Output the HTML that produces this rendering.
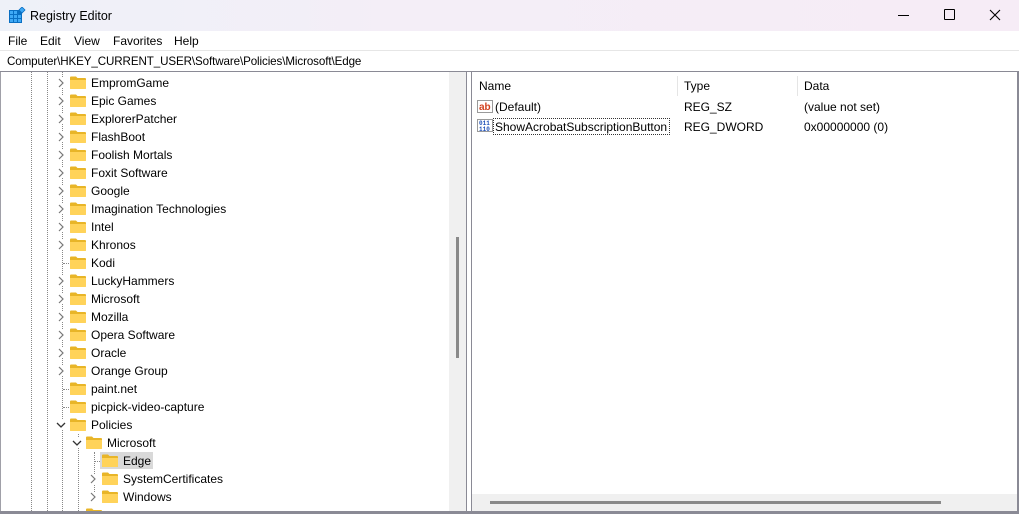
<!DOCTYPE html>
<html><head><meta charset="utf-8"><style>
*{margin:0;padding:0;box-sizing:border-box}
body{width:1019px;height:514px;overflow:hidden;background:#fff;font-family:"Liberation Sans",sans-serif;font-size:12px;color:#000;position:relative}
.a{position:absolute;white-space:nowrap}
.fold{position:absolute;width:16px;height:13px}
.chev{position:absolute;width:10px;height:10px}
.dv{position:absolute;border-left:1px dotted #888;width:0}
.dh{position:absolute;border-top:1px dotted #888;height:0}
#treewrap{position:absolute;left:0;top:72px;width:449px;height:439px;overflow:hidden}
#tree{position:absolute;left:0;top:-72px;width:449px;height:511px}
</style></head><body>
<div class="a" style="left:0;top:0;width:1019px;height:31px;background:linear-gradient(90deg,#eef1f8,#f4eef7 40%,#f6ecf6)"></div>
<svg class="a" style="left:8px;top:7px" width="18" height="18" viewBox="0 0 18 18">
<rect x="1" y="3" width="13" height="13" fill="#0a6fc2"/>
<g fill="#3fa9f5"><rect x="2" y="4" width="3" height="3"/><rect x="6" y="4" width="3" height="3"/><rect x="2" y="8" width="3" height="3"/><rect x="6" y="8" width="3" height="3"/><rect x="10" y="8" width="3" height="3"/><rect x="2" y="12" width="3" height="3"/><rect x="6" y="12" width="3" height="3"/><rect x="10" y="12" width="3" height="3"/></g>
<path d="M14 0 L17 3 L14 6 L11 3Z" fill="#3fa9f5" stroke="#0a6fc2" stroke-width="0.8"/></svg>
<div class="a" style="left:30px;top:9px;font-size:12.5px">Registry Editor</div>
<div class="a" style="left:898px;top:15px;width:11px;border-top:1px solid #000"></div>
<div class="a" style="left:944px;top:9px;width:11px;height:11px;border:1px solid #000;border-radius:1px"></div>
<svg class="a" style="left:989px;top:9px" width="12" height="12"><path d="M1 1L11 11M11 1L1 11" stroke="#000" stroke-width="1.1"/></svg>
<div class="a" style="left:8px;top:34px">File</div>
<div class="a" style="left:40px;top:34px">Edit</div>
<div class="a" style="left:74px;top:34px">View</div>
<div class="a" style="left:113px;top:34px">Favorites</div>
<div class="a" style="left:174px;top:34px">Help</div>
<div class="a" style="left:0;top:50px;width:1019px;height:1px;background:#e6e6e6"></div>
<div class="a" style="left:7px;top:55px;font-size:11.6px;letter-spacing:-0.1px">Computer\HKEY_CURRENT_USER\Software\Policies\Microsoft\Edge</div>
<div class="a" style="left:0;top:71px;width:1019px;height:1px;background:#8a8a95"></div>
<div class="a" style="left:0;top:72px;width:1px;height:439px;background:#a0a0a8"></div>
<div class="a" style="left:1017px;top:72px;width:2px;height:439px;background:#8a8a95"></div>
<div class="a" style="left:0;top:511px;width:1019px;height:3px;background:#8a8a95"></div>
<div class="a" style="left:449px;top:72px;width:17px;height:439px;background:#f0f0f0"></div>
<div class="a" style="left:456px;top:237px;width:3px;height:121px;background:#8a8a8a"></div>
<div class="a" style="left:466px;top:72px;width:1px;height:439px;background:#8a8a95"></div>
<div class="a" style="left:471px;top:72px;width:1px;height:439px;background:#8a8a95"></div>
<div class="a" style="left:467px;top:72px;width:4px;height:439px;background:#fff"></div>
<div id="treewrap"><div id="tree">
<div class="dv" style="left:31px;top:72px;height:439px"></div>
<div class="dv" style="left:47px;top:72px;height:439px"></div>
<div class="dv" style="left:62px;top:72px;height:439px"></div>
<div class="dv" style="left:78px;top:434px;height:77px"></div>
<div class="dv" style="left:94px;top:452px;height:46px"></div>
<div id="rows"></div>
</div></div>
<div class="a" style="left:677px;top:76px;width:1px;height:20px;background:#e5e5e5"></div>
<div class="a" style="left:797px;top:76px;width:1px;height:20px;background:#e5e5e5"></div>
<div class="a" style="left:479px;top:79px">Name</div>
<div class="a" style="left:684px;top:79px">Type</div>
<div class="a" style="left:804px;top:79px">Data</div>
<svg class="a" style="left:477px;top:99px" width="16" height="15"><rect x="0.5" y="1.5" width="15" height="12" fill="#fff" stroke="#9a9a9a"/><text x="2" y="11" font-size="10" font-weight="bold" fill="#d2401e" font-family="Liberation Sans">ab</text></svg>
<div class="a" style="left:495px;top:100px">(Default)</div>
<div class="a" style="left:684px;top:100px">REG_SZ</div>
<div class="a" style="left:804px;top:100px">(value not set)</div>
<svg class="a" style="left:477px;top:118px" width="16" height="15"><rect x="0.5" y="1.5" width="15" height="12" fill="#fff" stroke="#9a9a9a"/><text x="2" y="7" font-size="6" font-weight="bold" fill="#1c4fb8" font-family="Liberation Mono">011</text><text x="2" y="13" font-size="6" font-weight="bold" fill="#1c4fb8" font-family="Liberation Mono">110</text></svg>
<div class="a" style="left:493px;top:118px;width:177px;height:17px;border:1px dotted #333"></div>
<div class="a" style="left:495px;top:120px">ShowAcrobatSubscriptionButton</div>
<div class="a" style="left:684px;top:120px">REG_DWORD</div>
<div class="a" style="left:804px;top:120px">0x00000000 (0)</div>
<div class="a" style="left:472px;top:494px;width:545px;height:17px;background:#f0f0f0"></div>
<div class="a" style="left:490px;top:501px;width:451px;height:3px;background:#8a8a8a"></div>
<script>
var rows=[["EmpromGame",1,1],["Epic Games",1,1],["ExplorerPatcher",1,1],["FlashBoot",1,1],["Foolish Mortals",1,1],["Foxit Software",1,1],["Google",1,1],["Imagination Technologies",1,1],["Intel",1,1],["Khronos",1,1],["Kodi",1,0],["LuckyHammers",1,1],["Microsoft",1,1],["Mozilla",1,1],["Opera Software",1,1],["Oracle",1,1],["Orange Group",1,1],["paint.net",1,0],["picpick-video-capture",1,0],["Policies",1,2],["Microsoft",2,2],["Edge",3,0],["SystemCertificates",3,1],["Windows",3,1],["",2,0]];
var h="";
rows.forEach(function(r,i){var cy=83+i*18;var o=(r[1]-1)*16;
if(r[2]==1)h+='<svg class="chev" style="left:'+(56+o)+'px;top:'+(cy-5)+'px;background:#fff" width="10" height="10"><path d="M3 1L7 5L3 9" fill="none" stroke="#777" stroke-width="1.2"/></svg>';
else if(r[2]==2)h+='<svg class="chev" style="left:'+(56+o)+'px;top:'+(cy-5)+'px;background:#fff" width="10" height="10"><path d="M1 3L5 7L9 3" fill="none" stroke="#333" stroke-width="1.3"/></svg>';
else if(r[0])h+='<div class="dh" style="left:'+(63+o+(r[1]==3?-1:0))+'px;top:'+cy+'px;width:6px"></div>';
if(r[0]=="Edge")h+='<div class="a" style="left:100px;top:452px;width:53px;height:17px;background:#d9d9d9"></div>';
var fh=Math.min(13,511-(cy-7));
h+='<svg class="fold" style="left:'+(70+o)+'px;top:'+(cy-7)+'px;height:'+fh+'px" viewBox="0 0 16 '+fh+'" preserveAspectRatio="xMinYMin slice"><path d="M0 1.5Q0 0.5 1 0.5H6L7.5 2H15Q16 2 16 3V12Q16 13 15 13H1Q0 13 0 12Z" fill="#e8b528"/><path d="M0 4H16V12Q16 13 15 13H1Q0 13 0 12Z" fill="#ffd35a"/></svg>';
if(r[0])h+='<div class="a" style="left:'+(91+o)+'px;top:'+(cy-7)+'px">'+r[0]+'</div>';});
document.getElementById("rows").innerHTML=h;
</script>
</body></html>
